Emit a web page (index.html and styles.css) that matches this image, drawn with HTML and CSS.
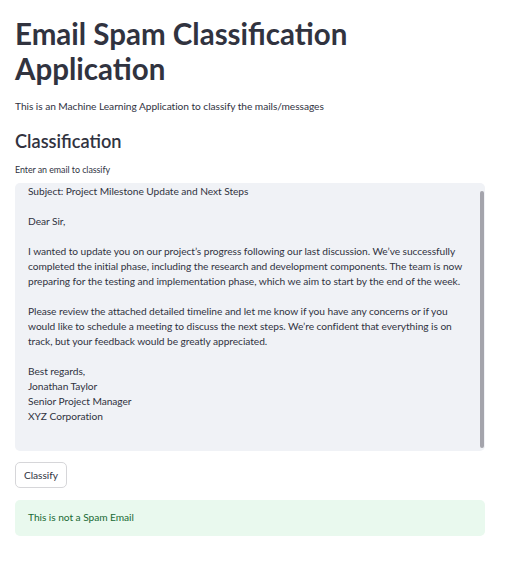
FILE: index.html
```html
<!DOCTYPE html>
<html lang="en">
<head>
<meta charset="utf-8">
<title>Email Spam Classification Application</title>
<link rel="stylesheet" href="styles.css">
</head>
<body>
<main class="app">
  <h1 class="title">Email Spam Classification<br>Application</h1>
  <p class="subtitle">This is an Machine Learning Application to classify the mails/messages</p>
  <h2 class="section">Classification</h2>
  <label class="field-label">Enter an email to classify</label>
  <div class="textarea">
    <div class="textarea-text">
      <p>Subject: Project Milestone Update and Next Steps</p>
      <p>Dear Sir,</p>
      <p>I wanted to update you on our project’s progress following our last discussion. We’ve successfully<br>completed the initial phase, including the research and development components. The team is now<br>preparing for the testing and implementation phase, which we aim to start by the end of the week.</p>
      <p>Please review the attached detailed timeline and let me know if you have any concerns or if you<br>would like to schedule a meeting to discuss the next steps. We’re confident that everything is on<br>track, but your feedback would be greatly appreciated.</p>
      <p>Best regards,<br>Jonathan Taylor<br>Senior Project Manager<br>XYZ Corporation</p>
    </div>
    <div class="scroll-thumb"></div>
  </div>
  <button class="btn" type="button">Classify</button>
  <div class="alert-success">This is not a Spam Email</div>
</main>
</body>
</html>
```

FILE: styles.css
```css
html, body {
  margin: 0;
  padding: 0;
  background: #ffffff;
}

body {
  font-family: Lato, "Liberation Sans", sans-serif;
  color: #31333f;
}

.app {
  display: flex;
  flex-direction: column;
  align-items: flex-start;
  padding: 16px 34px 40px 15px;
}

.title {
  margin: 0;
  font-size: 29.5px;
  line-height: 35px;
  font-weight: 700;
  color: #31333f;
}

.subtitle {
  margin: 12px 0 0;
  font-size: 10.2px;
  letter-spacing: -0.05px;
  line-height: 16px;
}

.section {
  margin: 15px 0 0;
  font-size: 18.2px;
  line-height: 24px;
  font-weight: 600;
}

.field-label {
  margin-top: 10px;
  font-size: 8.9px;
  letter-spacing: -0.05px;
  line-height: 14px;
}

.textarea {
  margin-top: 6px;
  align-self: stretch;
  height: 268px;
  box-sizing: border-box;
  background: #f0f2f6;
  border-radius: 5px;
  display: flex;
}

.textarea-text {
  flex: 1;
  min-width: 0;
  padding: 1px 8px 0 13px;
  font-size: 10.2px;
  letter-spacing: -0.05px;
  line-height: 15px;
  white-space: nowrap;
}

.textarea-text p {
  margin: 0 0 15px;
}

.scroll-thumb {
  flex: none;
  width: 4px;
  margin: 8px 1px 3px 0;
  background: #a4a4ac;
  border-radius: 2px;
}

.btn {
  margin-top: 11px;
  height: 26px;
  padding: 0 8px;
  font-family: inherit;
  font-size: 10.2px;
  letter-spacing: -0.05px;
  color: #31333f;
  background: #ffffff;
  border: 1px solid #d6d6d9;
  border-radius: 5px;
}

.alert-success {
  margin-top: 12px;
  align-self: stretch;
  box-sizing: border-box;
  height: 36px;
  padding: 9px 13px 11px;
  font-size: 10.2px;
  letter-spacing: -0.05px;
  line-height: 16px;
  color: #1a6b35;
  background: #e9f9ee;
  border-radius: 5px;
}
```
